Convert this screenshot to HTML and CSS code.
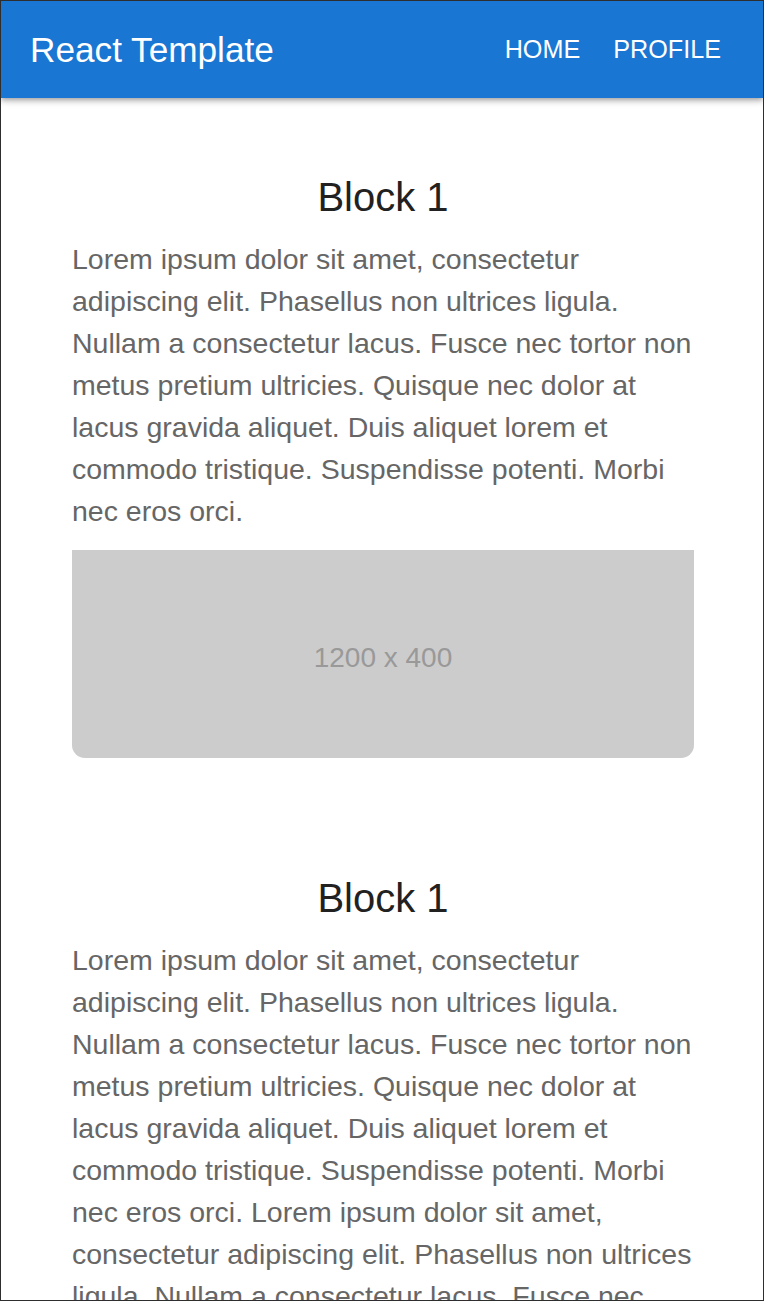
FILE: index.html
```html
<!DOCTYPE html>
<html lang="en">
<head>
<meta charset="utf-8">
<title>React Template</title>
<link rel="stylesheet" href="styles.css">
</head>
<body>
<div class="frame">
  <header class="appbar">
    <div class="brand">React Template</div>
    <nav class="nav">
      <a class="nav-link" href="#">HOME</a>
      <a class="nav-link" href="#">PROFILE</a>
    </nav>
  </header>
  <main class="main">
    <section class="block">
      <h2 class="block-title">Block 1</h2>
      <p class="block-text">Lorem ipsum dolor sit amet, consectetur adipiscing elit. Phasellus non ultrices ligula. Nullam a consectetur lacus. Fusce nec tortor non metus pretium ultricies. Quisque nec dolor at lacus gravida aliquet. Duis aliquet lorem et commodo tristique. Suspendisse potenti. Morbi nec eros orci.</p>
      <div class="placeholder"><span class="placeholder-label">1200 x 400</span></div>
    </section>
    <section class="block">
      <h2 class="block-title">Block 1</h2>
      <p class="block-text">Lorem ipsum dolor sit amet, consectetur adipiscing elit. Phasellus non ultrices ligula. Nullam a consectetur lacus. Fusce nec tortor non metus pretium ultricies. Quisque nec dolor at lacus gravida aliquet. Duis aliquet lorem et commodo tristique. Suspendisse potenti. Morbi nec eros orci. Lorem ipsum dolor sit amet, consectetur adipiscing elit. Phasellus non ultrices ligula. Nullam a consectetur lacus. Fusce nec tortor non metus pretium ultricies. Quisque nec dolor at lacus gravida aliquet. Duis aliquet lorem et commodo tristique. Suspendisse potenti. Morbi nec eros orci.</p>
      <div class="placeholder"><span class="placeholder-label">1200 x 400</span></div>
    </section>
  </main>
</div>
</body>
</html>
```

FILE: styles.css
```css
html, body {
  margin: 0;
  padding: 0;
  height: 100%;
  background: #ffffff;
}

body {
  font-family: "Liberation Sans", Arial, sans-serif;
}

.frame {
  height: 100vh;
  box-sizing: border-box;
  border: 1px solid #2e2e2e;
  overflow: hidden;
  display: flex;
  flex-direction: column;
  background: #ffffff;
}

.appbar {
  flex: 0 0 auto;
  height: 97px;
  box-sizing: border-box;
  background: #1976d2;
  color: #ffffff;
  display: flex;
  align-items: center;
  justify-content: space-between;
  padding: 0 42px 0 29px;
  position: relative;
  z-index: 1;
  box-shadow: 0 2px 4px -1px rgba(0,0,0,0.2), 0 4px 5px 0 rgba(0,0,0,0.14), 0 1px 10px 0 rgba(0,0,0,0.12);
}

.brand {
  font-size: 35.2px;
  line-height: normal;
  font-weight: 400;
}

.nav {
  display: flex;
  align-items: center;
  gap: 33px;
}

.nav-link {
  color: #ffffff;
  text-decoration: none;
  font-size: 25.2px;
  line-height: normal;
}

.main {
  flex: 1 1 auto;
  padding: 75px 69px 0 71px;
  display: flex;
  flex-direction: column;
  gap: 116px;
}

.block {
  display: flex;
  flex-direction: column;
}

.block-title {
  margin: 0 0 17px;
  font-size: 40px;
  line-height: 48px;
  font-weight: 400;
  color: #212121;
  text-align: center;
}

.block-text {
  margin: 0 0 18px;
  font-size: 28.5px;
  line-height: 42px;
  color: #666666;
}

.placeholder {
  height: 208px;
  box-sizing: border-box;
  padding-top: 8px;
  background: #cccccc;
  border-radius: 0 0 13px 13px;
  display: flex;
  align-items: center;
  justify-content: center;
}

.placeholder-label {
  font-size: 28px;
  color: #999999;
}
```
